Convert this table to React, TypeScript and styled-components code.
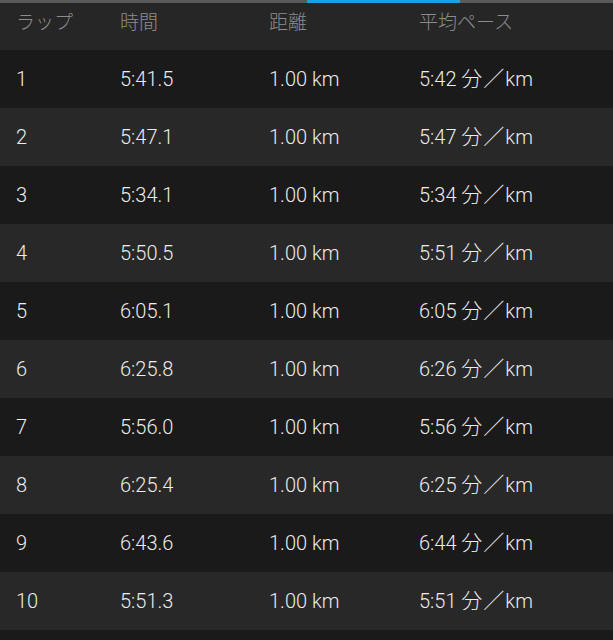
import styled, { createGlobalStyle } from "styled-components";

const GlobalStyle = createGlobalStyle`
  html, body {
    margin: 0;
    padding: 0;
    background-color: #1a1a1a;
  }
`;

const Page = styled.div`
  width: 613px;
  height: 640px;
  overflow: hidden;
  background-color: #1a1a1a;
  font-family: Roboto, "Noto Sans CJK JP", sans-serif;
  font-weight: 300;
`;

const TabIndicator = styled.div`
  height: 3px;
  background-color: #5a5a5a;
  display: flex;
`;

const ActiveTab = styled.div`
  margin-left: 307px;
  width: 153px;
  background-color: #1ba1e2;
`;

const Row = styled.div<{ $shade: "head" | "dark" | "light" }>`
  display: grid;
  grid-template-columns: 104px 149px 150px 1fr;
  align-items: center;
  padding-left: 16px;
  height: ${(p) => (p.$shade === "head" ? "47px" : "58px")};
  background-color: ${(p) =>
    p.$shade === "dark" ? "#1a1a1a" : p.$shade === "light" ? "#282828" : "#262626"};
`;

const HeadCell = styled.div`
  color: #8c8c8c;
  font-size: 19px;
  line-height: 24px;
  padding-bottom: 8px;
`;

const Cell = styled.div`
  color: #ececec;
  font-size: 20px;
  line-height: 24px;
  height: 24px;
  white-space: nowrap;
`;

const Unit = styled.span`
  font-size: 21px;
  line-height: 24px;
  letter-spacing: 1px;
`;

interface Lap {
  time: string;
  pace: string;
}

const laps: Lap[] = [
  { time: "5:41.5", pace: "5:42" },
  { time: "5:47.1", pace: "5:47" },
  { time: "5:34.1", pace: "5:34" },
  { time: "5:50.5", pace: "5:51" },
  { time: "6:05.1", pace: "6:05" },
  { time: "6:25.8", pace: "6:26" },
  { time: "5:56.0", pace: "5:56" },
  { time: "6:25.4", pace: "6:25" },
  { time: "6:43.6", pace: "6:44" },
  { time: "5:51.3", pace: "5:51" },
];

export default function App() {
  return (
    <Page>
      <GlobalStyle />
      <TabIndicator>
        <ActiveTab />
      </TabIndicator>
      <Row $shade="head">
        <HeadCell>ラップ</HeadCell>
        <HeadCell>時間</HeadCell>
        <HeadCell>距離</HeadCell>
        <HeadCell>平均ペース</HeadCell>
      </Row>
      {laps.map((lap, i) => (
        <Row key={i} $shade={i % 2 === 0 ? "dark" : "light"}>
          <Cell>{i + 1}</Cell>
          <Cell>{lap.time}</Cell>
          <Cell>1.00 km</Cell>
          <Cell>
            {lap.pace} <Unit>分／</Unit>km
          </Cell>
        </Row>
      ))}
    </Page>
  );
}
